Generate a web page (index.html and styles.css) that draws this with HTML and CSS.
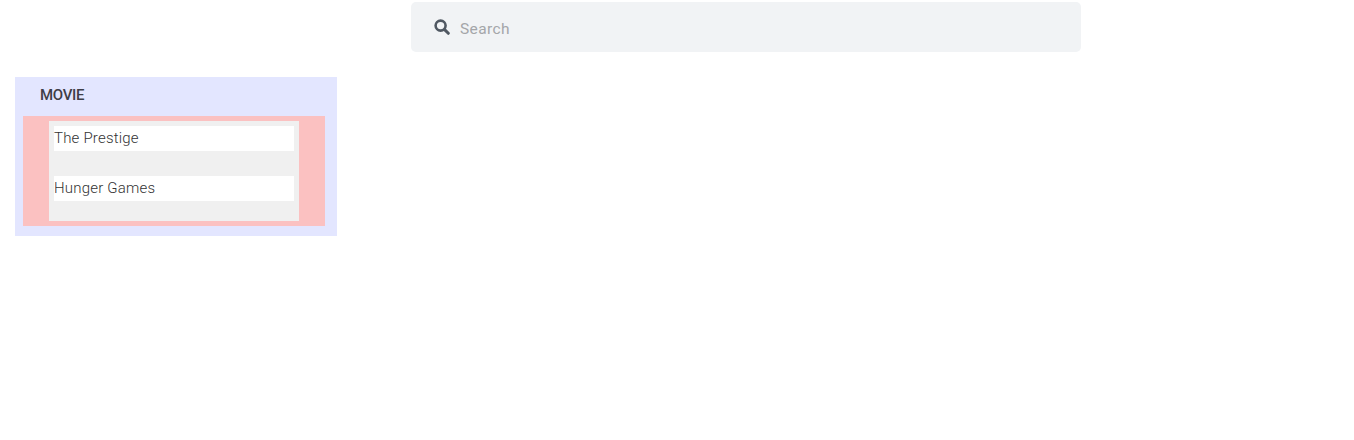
FILE: index.html
```html
<!DOCTYPE html>
<html lang="en">
<head>
    <meta charset="UTF-8">
    <title>Movies</title>
    <link rel="stylesheet" href="styles.css">
</head>
<body>
    <div class="topbar">
        <div class="search">
            <svg class="search-icon" viewBox="0 0 16 16" width="16" height="16">
                <circle cx="6.6" cy="6.6" r="5" fill="none" stroke="#505862" stroke-width="2.6"/>
                <path d="M10.6 10.6L14.3 14.3" stroke="#505862" stroke-width="3" stroke-linecap="round"/>
            </svg>
            <span class="search-text">Search</span>
        </div>
    </div>

    <div class="category">
        <h3 class="category-title">MOVIE</h3>
        <div class="category-body">
            <ul class="movie-list">
                <li class="movie">The Prestige</li>
                <li class="movie">Hunger Games</li>
            </ul>
        </div>
    </div>
</body>
</html>
```

FILE: styles.css
```css
body {
    font-family: Roboto, Arial, sans-serif;
    background-color: #FFFFFF;
    color: #444444;
    margin: 0;
}

.topbar {
    padding: 2px 0 0 411px;
}

.search {
    display: flex;
    align-items: center;
    width: 670px;
    height: 50px;
    padding-left: 23px;
    box-sizing: border-box;
    background: #F1F3F5;
    border-radius: 5px;
}

.search-icon {
    margin-right: 10px;
}

.search-text {
    font-size: 15.5px;
    line-height: 18px;
    padding-top: 3px;
    letter-spacing: 0.4px;
    color: #A4A6A9;
}

.category {
    width: 322px;
    height: 159px;
    box-sizing: border-box;
    margin: 25px 0 0 15px;
    padding: 0 12px 10px 8px;
    background: #E3E6FF;
}

.category-title {
    margin: 0;
    height: 39px;
    line-height: 37px;
    padding-left: 17px;
    font-size: 15px;
    font-weight: 500;
    letter-spacing: -0.3px;
    color: #3E3E46;
}

.category-body {
    padding: 5px 26px;
    background: #FBC1C1;
}

.movie-list {
    list-style: none;
    margin: 0;
    padding: 5px;
    background: #F0F0F0;
}

.movie {
    height: 25px;
    line-height: 24px;
    margin-bottom: 25px;
    background: #FFFFFF;
    font-size: 15px;
    font-weight: 300;
    letter-spacing: 0.2px;
    color: #333333;
}

.movie:last-child {
    margin-bottom: 15px;
}
```
